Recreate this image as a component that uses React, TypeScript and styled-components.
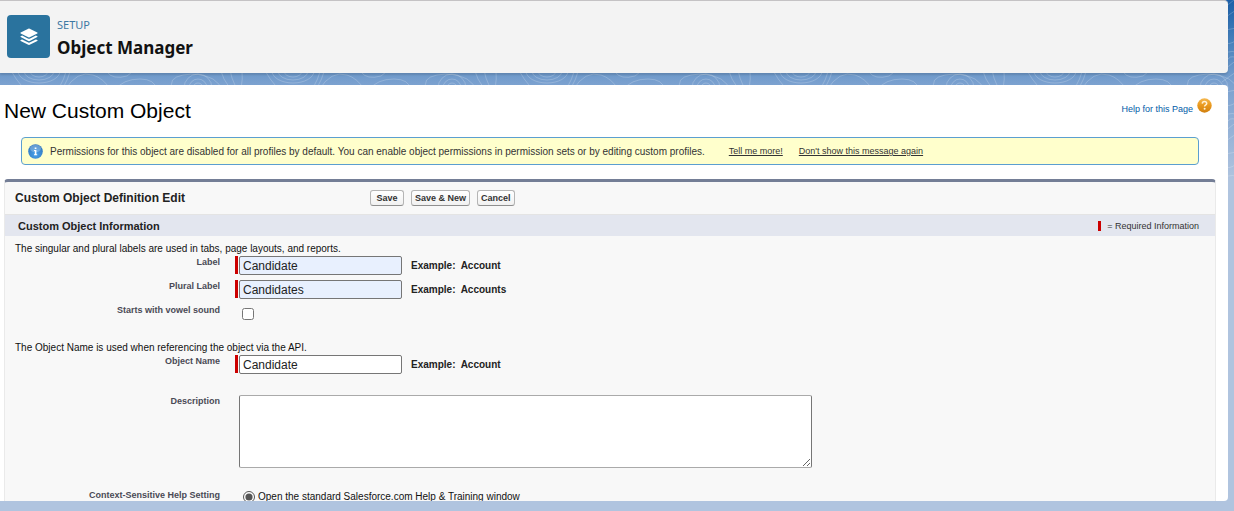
import React from 'react';
import styled, { createGlobalStyle } from 'styled-components';

const GlobalStyle = createGlobalStyle`
  *, *::before, *::after { box-sizing: border-box; }
  body { margin: 0; font-family: "Liberation Sans", Arial, sans-serif; color: #222; }
`;

const Page = styled.div`
  position: relative;
  display: flex;
  flex-direction: column;
  gap: 12px;
  height: 100vh;
  padding: 0 6px 10px 0;
  overflow: hidden;
  background: #b0c4df linear-gradient(#1c5fa8 0, #3f7cb9 36px, #7ba1cf 84px, #b0c4df 180px) no-repeat;
`;

const Backdrop = styled.svg`
  position: absolute;
  inset: 0;
  width: 100%;
  height: 180px;
`;

const Header = styled.header`
  position: relative;
  display: flex;
  gap: 7px;
  flex: none;
  height: 73px;
  padding: 14px 7px;
  background: #f3f3f3;
  border-top: 1px solid #c4c2c4;
  border-radius: 0 4px 4px 0;
  box-shadow: 0 2px 2px rgba(0, 0, 0, 0.12);
`;

const HeaderIcon = styled.span`
  display: flex;
  align-items: center;
  justify-content: center;
  width: 43px;
  height: 43px;
  border-radius: 4px;
  background: #2a739e;
`;

const HeaderText = styled.div`
  font-family: "Noto Sans", sans-serif;
`;

const Eyebrow = styled.p`
  margin: 0;
  font-size: 11px;
  line-height: 20px;
  color: #3c78a3;
`;

const HeaderTitle = styled.h1`
  margin: 0;
  font-size: 17px;
  line-height: 25px;
  font-weight: 700;
  color: #111;
`;

const Content = styled.main`
  position: relative;
  flex: 1;
  min-height: 0;
  overflow: auto;
  scrollbar-width: none;
  padding: 0 12px 0 4px;
  background: #fff;
  border-radius: 0 4px 4px 0;
`;

const TitleRow = styled.div`
  display: flex;
  align-items: flex-start;
  justify-content: space-between;
  padding: 12px 4px 12px 0;
`;

const PageTitle = styled.h2`
  margin: 0;
  font-size: 21px;
  line-height: 28px;
  font-weight: 400;
  color: #000;
`;

const HelpLink = styled.a`
  display: flex;
  gap: 4px;
  padding-top: 1px;
  font-size: 9px;
  line-height: 22px;
  color: #015ba7;
  text-decoration: none;
`;

const Notice = styled.div`
  display: flex;
  align-items: center;
  height: 28px;
  margin: 0 17px 14px;
  padding: 0 6px;
  background: #ffc;
  border: 1px solid #5b9fd0;
  border-radius: 4px;
  font-size: 10px;
  white-space: nowrap;
  color: #333;
`;

const NoticeText = styled.p`
  margin: 0 24px 0 7px;
`;

const NoticeLink = styled.a`
  margin-right: 16px;
  font-size: 9px;
  color: #333;
`;

const Panel = styled.form`
  min-height: 400px;
  background: #f8f8f8;
  border: solid #eaeaea;
  border-width: 0 1px;
  border-top: 3px solid #747e96;
  border-radius: 4px 4px 0 0;
`;

const Toolbar = styled.div`
  display: flex;
  align-items: center;
  height: 33px;
  padding-left: 10px;
  border-bottom: 1px solid #e4e4e4;
`;

const PanelTitle = styled.h3`
  width: 355px;
  margin: 0;
  font-size: 12px;
  color: #222;
`;

const Buttons = styled.div`
  display: flex;
  gap: 7px;
`;

const Button = styled.button`
  min-width: 34px;
  height: 16px;
  padding: 0 3px;
  background: linear-gradient(#fff, #f1f1f1);
  border: 1px solid #b5b5b5;
  border-bottom-color: #8f8f8f;
  border-radius: 3px;
  font: bold 9px/12px "Liberation Sans", Arial, sans-serif;
  color: #333;
`;

const SectionBar = styled.div`
  display: flex;
  align-items: center;
  justify-content: space-between;
  height: 21px;
  margin-bottom: 5px;
  padding: 0 16px 0 13px;
  background: #e3e6ef;
`;

const SectionTitle = styled.h4`
  margin: 0;
  font-size: 11px;
  color: #222;
`;

const RequiredKey = styled.span`
  display: flex;
  align-items: center;
  gap: 6px;
  font-size: 9px;
  color: #333;
`;

const RequiredBar = styled.span<{ $height: number }>`
  flex: none;
  width: 3px;
  height: ${(p) => p.$height}px;
  background: #c00;
`;

const Hint = styled.p`
  margin: 0;
  padding-left: 10px;
  font-size: 10px;
  line-height: 15px;
  color: #111;
`;

const Row = styled.div<{ $height?: number }>`
  display: grid;
  grid-template-columns: 215px 577px;
  column-gap: 15px;
  min-height: ${(p) => p.$height ?? 24}px;
`;

const Label = styled.label`
  font-size: 9px;
  line-height: 12px;
  font-weight: 700;
  text-align: right;
  color: #4a4a56;
`;

const Field = styled.div`
  display: flex;
  align-items: flex-start;
  gap: 1px;
`;

const TextInput = styled.input<{ $filled?: boolean }>`
  width: 163px;
  height: 19px;
  padding: 0 3px;
  border: 1px solid #767676;
  border-radius: 2px;
  background: ${(p) => (p.$filled ? '#e8f0fe' : '#fff')};
  font: 12px "Liberation Sans", Arial, sans-serif;
  color: #222;
`;

const Example = styled.span`
  margin-left: 8px;
  font-size: 10px;
  line-height: 19px;
  font-weight: 700;
  white-space: pre;
`;

const Checkbox = styled.input`
  width: 12px;
  height: 12px;
  margin: 4px 0 0 7px;
`;

const TextArea = styled.textarea`
  width: 573px;
  height: 73px;
  margin-left: 4px;
  border: 1px solid #767676;
  border-top-color: #aaa;
  border-bottom-color: #aaa;
  border-radius: 2px;
`;

const RadioLabel = styled.label`
  display: flex;
  align-items: flex-start;
  gap: 3px;
  margin-left: 8px;
  font-size: 10px;
  line-height: 15px;
  color: #111;

  input { width: 12px; height: 12px; margin: 2px 0 0; accent-color: #555; }
`;

function Contours() {
  return (
    <Backdrop aria-hidden="true">
      <defs>
        <pattern id="contours" width="254" height="180" x="39" patternUnits="userSpaceOnUse">
          <g fill="none" stroke="#fff" strokeOpacity="0.2">
            <ellipse cx="0" cy="71" rx="9" ry="6" />
            <ellipse cx="0" cy="71" rx="15" ry="9" />
            <ellipse cx="0" cy="71" rx="21" ry="12" />
            <ellipse cx="254" cy="71" rx="9" ry="6" />
            <ellipse cx="254" cy="71" rx="15" ry="9" />
            <ellipse cx="254" cy="71" rx="21" ry="12" />
            <path d="M18 90Q26 80 28 66M22 90Q30 80 32 66M26 90Q38 70 54 75Q64 78 72 90" />
            <path d="M68 72Q74 80 88 76Q94 72 96 68M76 90Q84 79 101 79Q116 79 118 90M88 90Q98 81 111 90" />
            <circle cx="159" cy="88" r="5" />
            <circle cx="159" cy="88" r="9" />
            <circle cx="159" cy="88" r="14" />
            <path d="M134 90Q128 78 144 75Q160 72 174 79Q181 84 184 90M180 66Q184 80 192 90M190 66Q192 78 198 90M202 66Q205 80 201 90M224 66Q230 80 241 90" />
          </g>
        </pattern>
        <pattern id="edge" width="40" height="62" x="1222" patternUnits="userSpaceOnUse">
          <g fill="none" stroke="#fff" strokeOpacity="0.2">
            <path d="M0 8Q8 4 12 0M0 20Q8 14 14 10M0 34Q6 28 14 28M0 42Q8 46 14 40M0 56Q6 50 14 52M4 62Q8 54 14 58" />
          </g>
        </pattern>
      </defs>
      <rect width="100%" height="90" fill="url(#contours)" />
      <rect x="1222" width="100%" height="180" fill="url(#edge)" />
    </Backdrop>
  );
}

function LayersIcon() {
  return (
    <svg width="20" height="20" viewBox="0 0 20 20" fill="#fff" aria-hidden="true">
      <path d="M9.300 1.700q.7-.3 1.400 0l7.600 3.900q.7.4 0 .8l-7.600 3.900q-.7.3-1.400 0L1.700 6.400q-.7-.4 0-.8z" />
      <path d="M1.700 9.300l1.400-.7 6.200 3.100q.7.3 1.400 0l6.200-3.100 1.400.7q.7.4 0 .8l-7.600 3.900q-.7.3-1.400 0L1.700 10.100q-.7-.4 0-.8z" />
      <path d="M1.700 13.100l1.400-.7 6.200 3.100q.7.3 1.400 0l6.200-3.100 1.400.7q.7.4 0 .8l-7.600 3.900q-.7.3-1.400 0L1.700 13.900q-.7-.4 0-.8z" />
    </svg>
  );
}

function InfoIcon() {
  return (
    <svg width="15" height="15" viewBox="0 0 15 15" aria-hidden="true">
      <defs>
        <radialGradient id="info" cx="50%" cy="70%" r="70%">
          <stop offset="0" stopColor="#4aa3ea" />
          <stop offset="1" stopColor="#2f74bd" />
        </radialGradient>
      </defs>
      <circle cx="7.500" cy="7.500" r="7.300" fill="url(#info)" />
      <ellipse cx="7.500" cy="4.500" rx="5.500" ry="3.800" fill="#fff" opacity="0.25" />
      <path d="M6.700 3.500h1.700v1.500H6.700zM6 6h2.400v4.300h.8v.9H6v-.9h.8V6.900H6z" fill="#fff" />
    </svg>
  );
}

function HelpIcon() {
  return (
    <svg width="15" height="15" viewBox="0 0 15 15" aria-hidden="true">
      <defs>
        <linearGradient id="help" x2="0" y2="1">
          <stop offset="0" stopColor="#f5b850" />
          <stop offset="0.500" stopColor="#e9981c" />
          <stop offset="1" stopColor="#d08010" />
        </linearGradient>
      </defs>
      <circle cx="7.500" cy="7.500" r="7.200" fill="url(#help)" />
      <path d="M5.300 5.600q.1-2 2.200-2t2.200 1.800q0 1-1.200 1.700-.9.500-.9 1.500" fill="none" stroke="#fff3d8" strokeWidth="1.500" />
      <circle cx="7.600" cy="10.800" r="1" fill="#fff3d8" />
    </svg>
  );
}

interface TextRowProps {
  id: string;
  label: string;
  value: string;
  example: string;
  filled?: boolean;
  height?: number;
}

function TextRow({ id, label, value, example, filled, height }: TextRowProps) {
  return (
    <Row $height={height}>
      <Label htmlFor={id}>{label}</Label>
      <Field>
        <RequiredBar $height={18} />
        <TextInput id={id} defaultValue={value} $filled={filled} required />
        <Example>{'Example:  ' + example}</Example>
      </Field>
    </Row>
  );
}

export default function App() {
  return (
    <Page>
      <GlobalStyle />
      <Contours />
      <Header>
        <HeaderIcon><LayersIcon /></HeaderIcon>
        <HeaderText>
          <Eyebrow>SETUP</Eyebrow>
          <HeaderTitle>Object Manager</HeaderTitle>
        </HeaderText>
      </Header>
      <Content>
        <TitleRow>
          <PageTitle>New Custom Object</PageTitle>
          <HelpLink href="#help">Help for this Page <HelpIcon /></HelpLink>
        </TitleRow>
        <Notice>
          <InfoIcon />
          <NoticeText>
            Permissions for this object are disabled for all profiles by default. You can enable object permissions in permission sets or by editing custom profiles.
          </NoticeText>
          <NoticeLink href="#more">Tell me more!</NoticeLink>
          <NoticeLink href="#dismiss">Don't show this message again</NoticeLink>
        </Notice>
        <Panel onSubmit={(e) => e.preventDefault()}>
          <Toolbar>
            <PanelTitle>Custom Object Definition Edit</PanelTitle>
            <Buttons>
              <Button type="submit">Save</Button>
              <Button type="submit">Save &amp; New</Button>
              <Button type="button">Cancel</Button>
            </Buttons>
          </Toolbar>
          <SectionBar>
            <SectionTitle>Custom Object Information</SectionTitle>
            <RequiredKey><RequiredBar $height={10} /> = Required Information</RequiredKey>
          </SectionBar>
          <Hint>The singular and plural labels are used in tabs, page layouts, and reports.</Hint>
          <TextRow id="label" label="Label" value="Candidate" example="Account" filled />
          <TextRow id="plural" label="Plural Label" value="Candidates" example="Accounts" filled />
          <Row $height={36}>
            <Label htmlFor="vowel">Starts with vowel sound</Label>
            <Field><Checkbox id="vowel" type="checkbox" /></Field>
          </Row>
          <Hint>The Object Name is used when referencing the object via the API.</Hint>
          <TextRow id="name" label="Object Name" value="Candidate" example="Account" height={40} />
          <Row $height={94}>
            <Label htmlFor="description">Description</Label>
            <Field><TextArea id="description" /></Field>
          </Row>
          <Row>
            <Label as="span" id="help-setting">Context-Sensitive Help Setting</Label>
            <Field role="radiogroup" aria-labelledby="help-setting">
              <RadioLabel>
                <input type="radio" name="help" defaultChecked />
                Open the standard Salesforce.com Help &amp; Training window
              </RadioLabel>
            </Field>
          </Row>
        </Panel>
      </Content>
    </Page>
  );
}
